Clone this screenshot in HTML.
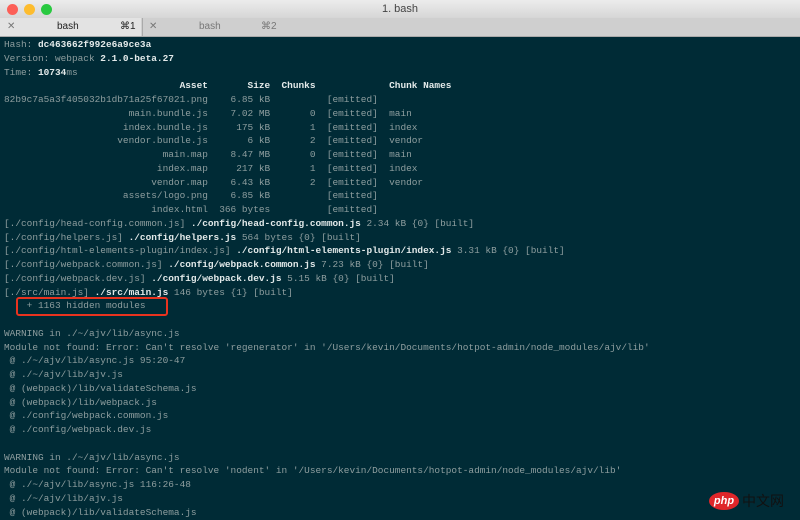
<!DOCTYPE html><html><head><style>
body{margin:0;width:800px;height:520px;overflow:hidden;background:#002b36;font-family:"Liberation Sans",sans-serif}
.title{height:18px;background:linear-gradient(#ececec,#d6d6d6);text-align:center;font-size:11px;line-height:18px;color:#444;position:relative}
.dot{position:absolute;top:4px;width:11px;height:11px;border-radius:50%}
.tabs{height:18px;background:#cfcfcf;position:relative;border-bottom:1px solid #aaa;font-size:10px;color:#222}
.tab{position:absolute;top:0;height:18px;line-height:18px}
pre{margin:0;position:absolute;left:4px;top:38px;font-family:"Liberation Mono",monospace;font-size:9.45px;line-height:13.75px;color:#8e9e9f}
b{color:#e3eaea;font-weight:bold}
</style></head><body>
<div class="title">1. bash
<div class="dot" style="left:7px;background:#fc5f57"></div><div class="dot" style="left:24px;background:#fdbc2e"></div><div class="dot" style="left:41px;background:#29c940"></div></div>
<div class="tabs">
<div class="tab" style="left:0;width:141px;background:#e3e3e3"><span style="position:absolute;left:7px;color:#777">✕</span><span style="position:absolute;left:57px">bash</span><span style="position:absolute;left:120px">⌘1</span></div>
<div class="tab" style="left:142px;width:141px;color:#777;border-left:1px solid #aaa"><span style="position:absolute;left:6px">✕</span><span style="position:absolute;left:56px">bash</span><span style="position:absolute;left:118px">⌘2</span></div>
</div>
<pre>Hash: <b>dc463662f992e6a9ce3a</b>
Version: webpack <b>2.1.0-beta.27</b>
Time: <b>10734</b>ms
                               <b>Asset       Size  Chunks             Chunk Names</b>
82b9c7a5a3f405032b1db71a25f67021.png    6.85 kB          [emitted]
                      main.bundle.js    7.02 MB       0  [emitted]  main
                     index.bundle.js     175 kB       1  [emitted]  index
                    vendor.bundle.js       6 kB       2  [emitted]  vendor
                            main.map    8.47 MB       0  [emitted]  main
                           index.map     217 kB       1  [emitted]  index
                          vendor.map    6.43 kB       2  [emitted]  vendor
                     assets/logo.png    6.85 kB          [emitted]
                          index.html  366 bytes          [emitted]
[./config/head-config.common.js] <b>./config/head-config.common.js</b> 2.34 kB {0} [built]
[./config/helpers.js] <b>./config/helpers.js</b> 564 bytes {0} [built]
[./config/html-elements-plugin/index.js] <b>./config/html-elements-plugin/index.js</b> 3.31 kB {0} [built]
[./config/webpack.common.js] <b>./config/webpack.common.js</b> 7.23 kB {0} [built]
[./config/webpack.dev.js] <b>./config/webpack.dev.js</b> 5.15 kB {0} [built]
[./src/main.js] <b>./src/main.js</b> 146 bytes {1} [built]
    + 1163 hidden modules

WARNING in ./~/ajv/lib/async.js
Module not found: Error: Can't resolve 'regenerator' in '/Users/kevin/Documents/hotpot-admin/node_modules/ajv/lib'
 @ ./~/ajv/lib/async.js 95:20-47
 @ ./~/ajv/lib/ajv.js
 @ (webpack)/lib/validateSchema.js
 @ (webpack)/lib/webpack.js
 @ ./config/webpack.common.js
 @ ./config/webpack.dev.js

WARNING in ./~/ajv/lib/async.js
Module not found: Error: Can't resolve 'nodent' in '/Users/kevin/Documents/hotpot-admin/node_modules/ajv/lib'
 @ ./~/ajv/lib/async.js 116:26-48
 @ ./~/ajv/lib/ajv.js
 @ (webpack)/lib/validateSchema.js</pre>
<div style="position:absolute;left:16px;top:297px;width:148px;height:15px;border:2px solid #e8331f;border-radius:3px"></div>
<div style="position:absolute;left:709px;top:492px;width:30px;height:18px;border-radius:50%;background:#e0262a;color:#fff;font:italic bold 11px/18px 'Liberation Sans',sans-serif;text-align:center">php</div>
<div style="position:absolute;left:742px;top:493px;color:#111;font:14px/16px 'Noto Sans CJK SC',sans-serif">中文网</div>
</body></html>
